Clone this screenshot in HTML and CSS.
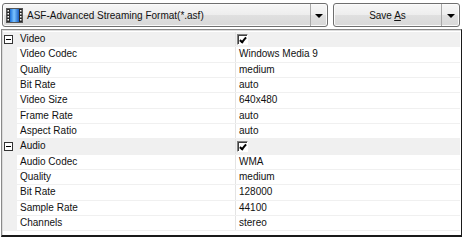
FILE: index.html
```html
<!DOCTYPE html>
<html>
<head>
    <title>Output Format</title>
    <link rel="stylesheet" href="styles.css">
</head>
<body>
    <div class="toolbar">
        <div class="combo">
            <span class="combo-main">
                <svg class="film" width="17" height="15" viewBox="0 0 17 15">
                    <defs>
                        <linearGradient id="blue" x1="0" y1="0" x2="1" y2="0">
                            <stop offset="0" stop-color="#1c6fd8"/>
                            <stop offset="0.45" stop-color="#7cc4ff"/>
                            <stop offset="1" stop-color="#1a5fc4"/>
                        </linearGradient>
                    </defs>
                    <rect x="0.5" y="0.5" width="16" height="14" fill="#2a2a2a" stroke="#555"/>
                    <rect x="4" y="1" width="9" height="13" fill="url(#blue)"/>
                    <rect x="1.5" y="2" width="1.5" height="1.5" fill="#fff"/>
                    <rect x="1.5" y="5" width="1.5" height="1.5" fill="#fff"/>
                    <rect x="1.5" y="8" width="1.5" height="1.5" fill="#fff"/>
                    <rect x="1.5" y="11" width="1.5" height="1.5" fill="#fff"/>
                    <rect x="14" y="2" width="1.5" height="1.5" fill="#fff"/>
                    <rect x="14" y="5" width="1.5" height="1.5" fill="#fff"/>
                    <rect x="14" y="8" width="1.5" height="1.5" fill="#fff"/>
                    <rect x="14" y="11" width="1.5" height="1.5" fill="#fff"/>
                </svg>
                <span>ASF-Advanced Streaming Format(*.asf)</span>
            </span>
            <span class="drop"><i class="arrow"></i></span>
        </div>
        <div class="split-btn">
            <span class="btn-main"><span>Save <u>A</u>s</span></span>
            <span class="drop"><i class="arrow"></i></span>
        </div>
    </div>

    <div class="grid">
        <div class="row cat">
            <span class="gutter"><i class="toggle"></i></span>
            <span class="name">Video</span>
            <span class="value"><i class="check"></i></span>
        </div>
        <div class="row"><span class="gutter"></span><span class="name">Video Codec</span><span class="value">Windows Media 9</span></div>
        <div class="row"><span class="gutter"></span><span class="name">Quality</span><span class="value">medium</span></div>
        <div class="row"><span class="gutter"></span><span class="name">Bit Rate</span><span class="value">auto</span></div>
        <div class="row"><span class="gutter"></span><span class="name">Video Size</span><span class="value">640x480</span></div>
        <div class="row"><span class="gutter"></span><span class="name">Frame Rate</span><span class="value">auto</span></div>
        <div class="row"><span class="gutter"></span><span class="name">Aspect Ratio</span><span class="value">auto</span></div>
        <div class="row cat">
            <span class="gutter"><i class="toggle"></i></span>
            <span class="name">Audio</span>
            <span class="value"><i class="check"></i></span>
        </div>
        <div class="row"><span class="gutter"></span><span class="name">Audio Codec</span><span class="value">WMA</span></div>
        <div class="row"><span class="gutter"></span><span class="name">Quality</span><span class="value">medium</span></div>
        <div class="row"><span class="gutter"></span><span class="name">Bit Rate</span><span class="value">128000</span></div>
        <div class="row"><span class="gutter"></span><span class="name">Sample Rate</span><span class="value">44100</span></div>
        <div class="row"><span class="gutter"></span><span class="name">Channels</span><span class="value">stereo</span></div>
    </div>
</body>
</html>
```

FILE: styles.css
```css
body {
    margin: 0;
    background-color: #ffffff;
    font-family: "Liberation Sans", Arial, sans-serif;
    font-size: 10px;
    color: #000000;
}

.toolbar {
    display: flex;
    gap: 5px;
    padding: 3px 0 0 2px;
    height: 24px;
}

.combo, .split-btn {
    display: flex;
    height: 24px;
    box-sizing: border-box;
    border: 1px solid #6f6f6f;
    border-radius: 3px;
    background: linear-gradient(#f7f7f7, #ededed 50%, #e0e0e0 50%, #d8d8d8);
    box-shadow: inset 0 0 0 1px #fbfbfb;
}

.combo {
    width: 326px;
}

.split-btn {
    width: 127px;
}

.combo-main {
    flex: 1;
    display: flex;
    align-items: center;
    gap: 4px;
    padding-left: 3px;
    color: #111111;
}

.btn-main {
    flex: 1;
    display: flex;
    align-items: center;
    justify-content: center;
    color: #111111;
}

.drop {
    width: 16px;
    display: flex;
    align-items: center;
    justify-content: center;
    border-left: 1px solid #a9a9a9;
}

.split-btn .drop {
    width: 17px;
}

.arrow {
    width: 0;
    height: 0;
    border-left: 4px solid transparent;
    border-right: 4px solid transparent;
    border-top: 4px solid #000000;
    margin-top: 1px;
}

.grid {
    margin: 2px 0 0 1px;
    width: 461px;
    height: 208px;
    box-sizing: border-box;
    border: 1px solid #8a8a8a;
    border-right-color: #1a1a1a;
    border-bottom: 2px solid #1a1a1a;
    padding: 2px 1px 0 1px;
    background-color: #ffffff;
    box-shadow: inset 1px 1px 0 #dcdcdc;
}

.row {
    display: flex;
    height: 15.33px;
    box-sizing: border-box;
    border-bottom: 1px solid #f0f0f0;
    line-height: 14px;
    color: #111111;
}

.gutter {
    width: 13px;
    flex: none;
    background-color: #f0f0f0;
    display: flex;
    align-items: center;
    padding-left: 1px;
}

.name {
    width: 215px;
    flex: none;
    padding-left: 3px;
    border-right: 1px solid #e4e4e4;
    white-space: nowrap;
}

.value {
    flex: 1;
    padding-left: 3px;
    display: flex;
    align-items: center;
}

.row.cat {
    background-color: #f0f0f0;
    border-bottom-color: #f0f0f0;
}

.toggle {
    position: relative;
    width: 9px;
    height: 9px;
    box-sizing: border-box;
    border: 1px solid #333333;
    background-color: #ffffff;
}

.toggle::after {
    content: "";
    position: absolute;
    left: 1px;
    top: 3px;
    width: 5px;
    height: 1px;
    background-color: #000000;
}

.check {
    position: relative;
    width: 11px;
    height: 11px;
    box-sizing: border-box;
    border-top: 1px solid #808080;
    border-left: 1px solid #808080;
    border-right: 1px solid #ffffff;
    border-bottom: 1px solid #ffffff;
    background-color: #ffffff;
    box-shadow: inset 1px 1px 0 #404040;
    margin-left: -2px;
}

.check::after {
    content: "";
    position: absolute;
    left: 3px;
    top: 1px;
    width: 2px;
    height: 5px;
    border-right: 2px solid #000000;
    border-bottom: 2px solid #000000;
    transform: rotate(40deg);
}
```
